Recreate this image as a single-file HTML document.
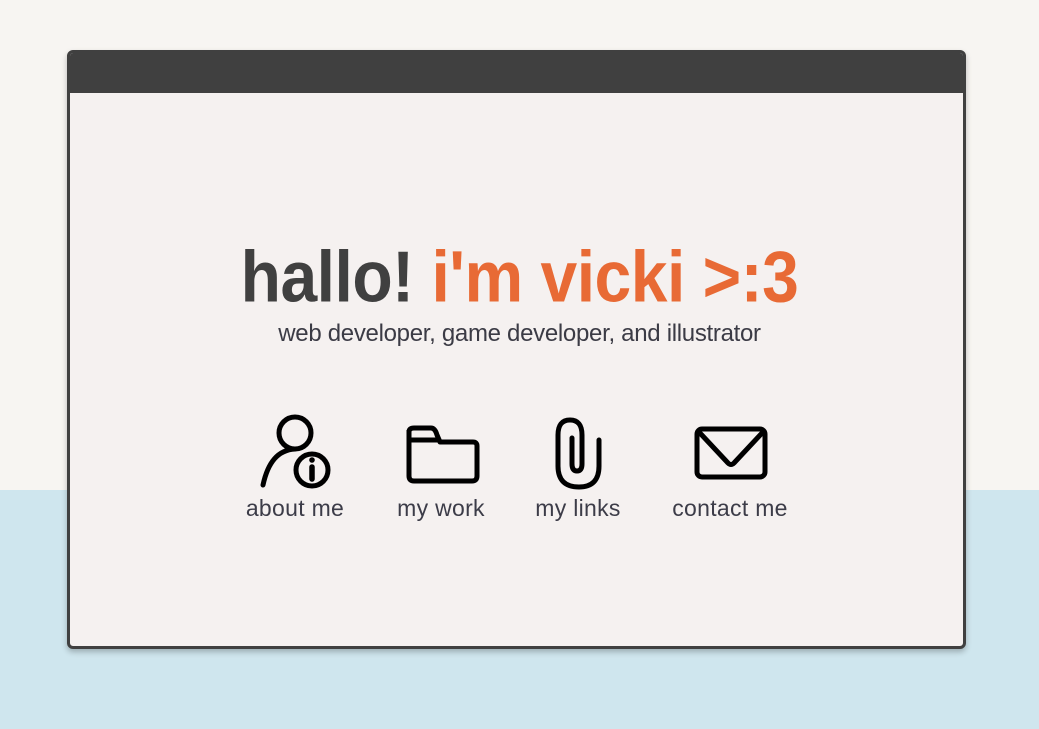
<!DOCTYPE html>
<html><head><style>
html,body{margin:0;padding:0;width:1039px;height:729px;overflow:hidden;font-family:"Liberation Sans",sans-serif;}
body{background:linear-gradient(#f7f5f2 0,#f7f5f2 490px,#cfe6ee 490px);position:relative}
.win{position:absolute;left:67px;top:50px;width:893px;height:593px;border:3px solid #404040;border-radius:6px;background:#f5f1f0;box-shadow:0 3px 6px rgba(0,0,0,.25);overflow:hidden}
.bar{position:absolute;left:0;top:0;right:0;height:40px;background:#404040}
h1{position:absolute;left:0;width:1039px;top:236px;margin:0;text-align:center;font-size:66px;font-weight:bold;color:#404040;letter-spacing:-0.5px;transform:scaleY(1.1);line-height:80px}
h1 span{color:#e86a35}
.sub{position:absolute;left:0;width:1039px;top:320px;text-align:center;font-size:24px;color:#3b3b45;letter-spacing:-0.3px}
.it{position:absolute;top:410px;width:160px;text-align:center;font-size:23px;color:#3c3c48;letter-spacing:0.3px}
.it svg{display:block;margin:0 auto;width:90px;height:84px}
.it div{margin-top:1px}
</style></head><body>
<div class="win"><div class="bar"></div></div>
<h1>hallo! <span>i'm vicki &gt;:3</span></h1>
<div class="sub">web developer, game developer, and illustrator</div>
<div class="it" style="left:215px"><svg viewBox="0 0 90 84" fill="none" stroke="#000" stroke-width="5" stroke-linecap="round"><circle cx="45" cy="23" r="16"/><path d="M45 39 C28 40 18 52 13 75"/><circle cx="62" cy="60" r="16" fill="#f5f1f0"/><path d="M62 57 V69" stroke-width="5.5"/><circle cx="62" cy="50" r="2.8" fill="#000" stroke="none"/></svg><div>about me</div></div>
<div class="it" style="left:361px"><svg viewBox="0 0 90 84" fill="none" stroke="#000" stroke-width="5" stroke-linejoin="round"><path d="M13 20 V66 Q13 71 18 71 H76 Q81 71 81 66 V36 Q81 32 77 32 H44 L41 25 Q39 18 35 18 H18 Q13 18 13 22 V30 H44"/></svg><div>my work</div></div>
<div class="it" style="left:498px"><svg viewBox="0 0 90 84" fill="none" stroke="#000" stroke-width="5" stroke-linecap="round"><path d="M66 30 V56 Q66 77 46 77 Q25 77 25 56 V25 Q25 10 37 10 Q49 10 49 25 V54 Q49 61 44 61 Q39 61 39 54 V28"/></svg><div>my links</div></div>
<div class="it" style="left:650px"><svg viewBox="0 0 90 84" fill="none" stroke="#000" stroke-width="5" stroke-linejoin="round"><rect x="12" y="19" width="68" height="48" rx="5"/><path d="M14 22 L43 53 Q46 56 49 53 L78 22"/></svg><div>contact me</div></div>
</body></html>
